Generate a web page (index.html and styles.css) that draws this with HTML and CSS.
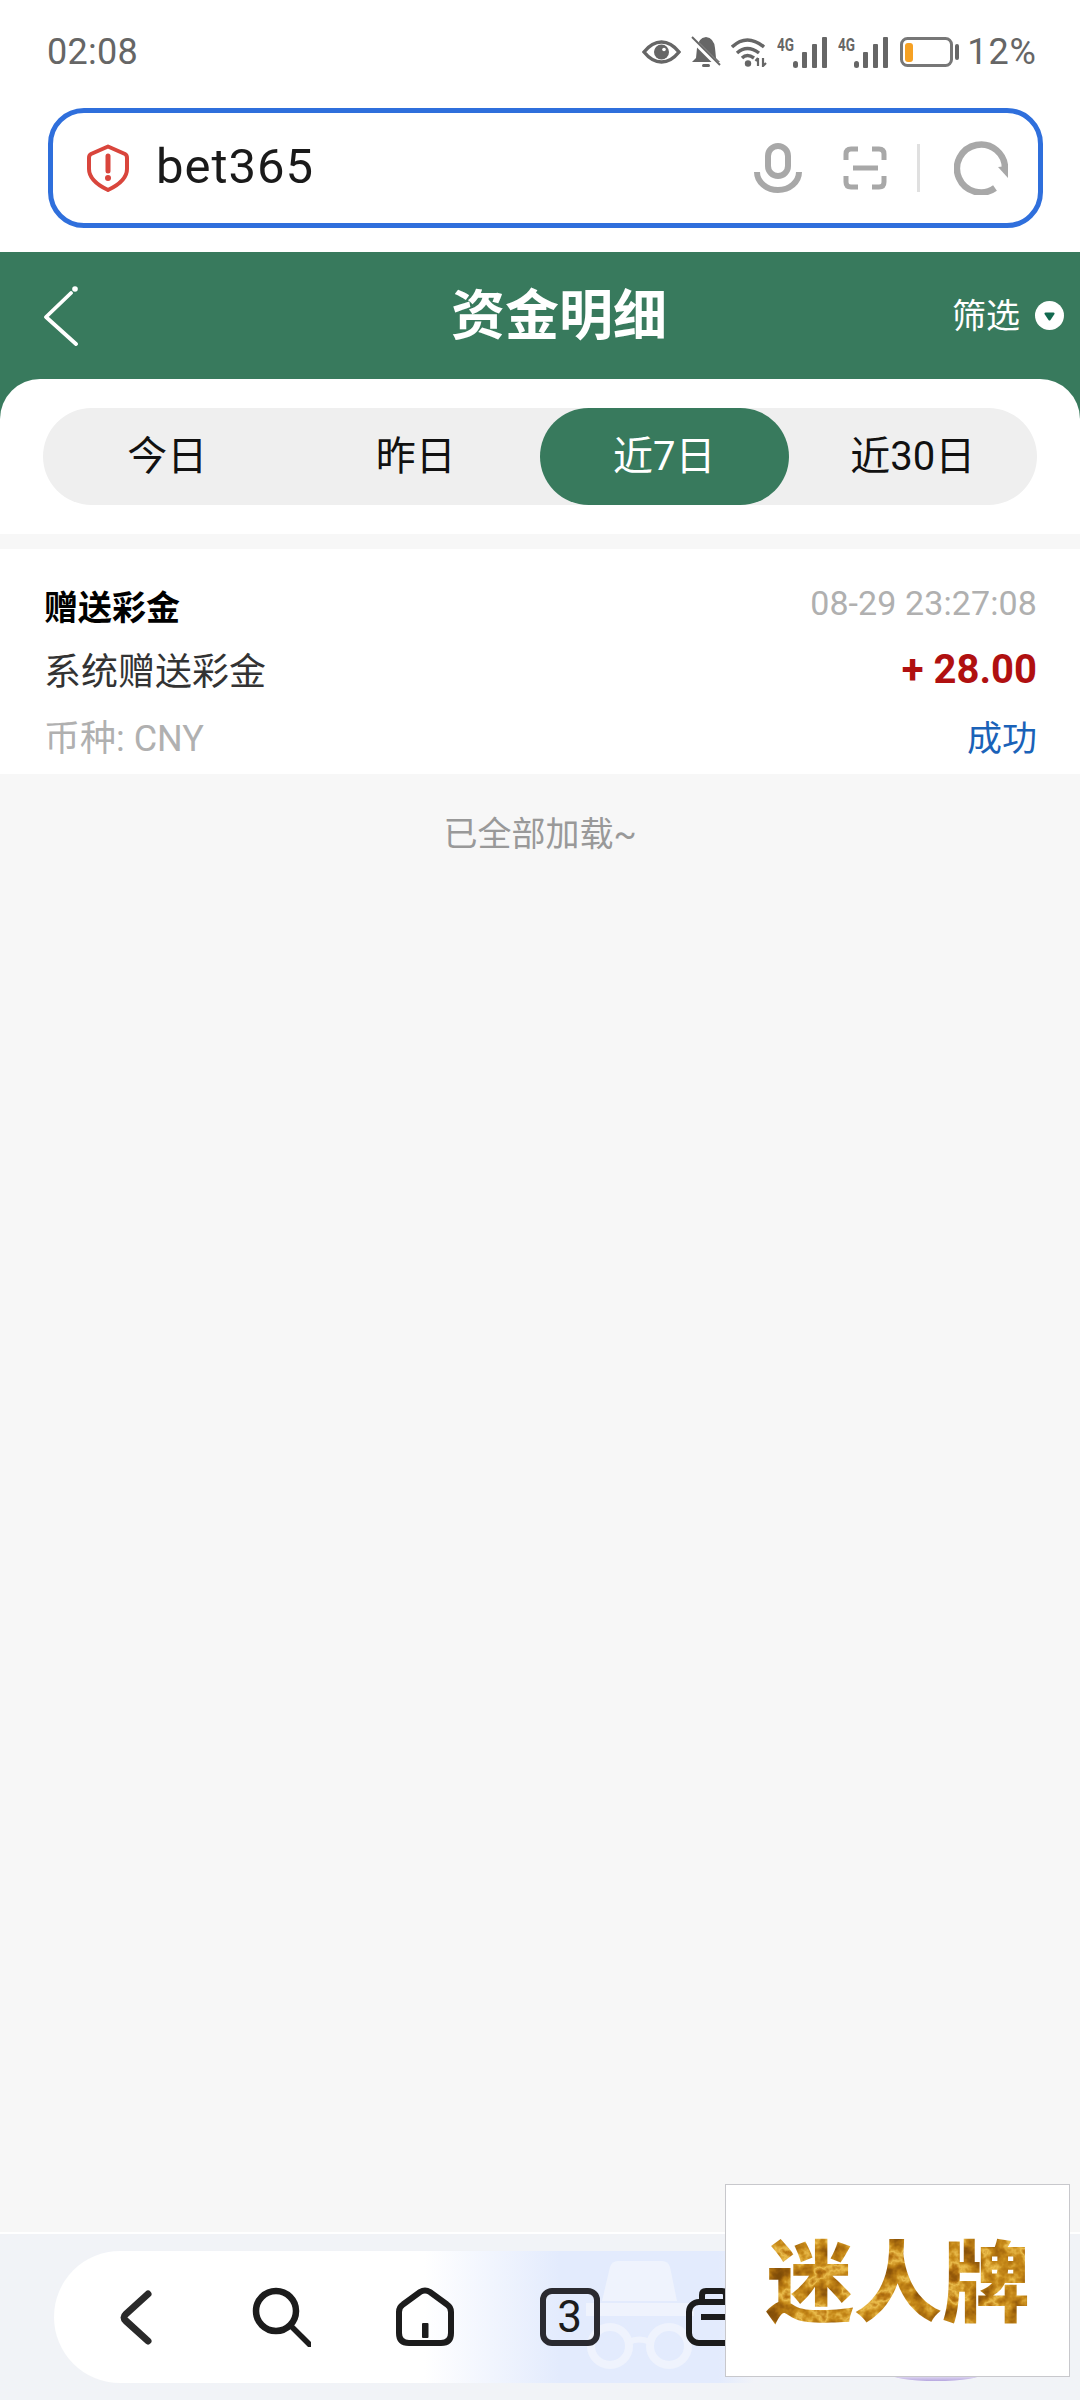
FILE: index.html
```html
<!DOCTYPE html>
<html lang="zh">
<head>
<meta charset="utf-8">
<title>资金明细</title>
<link rel="stylesheet" href="styles.css">
</head>
<body>
<div class="page">
  <div class="status">
    <span class="time">02:08</span>
    <div class="status-icons">
      <svg class="st-eye" viewBox="0 0 39 24"><path d="M2 12 Q10 2 19.500 2 Q29 2 37 12 Q29 22 19.500 22 Q10 22 2 12 Z" fill="none" stroke="#666" stroke-width="3.500"/><circle cx="19.500" cy="12" r="7.500" fill="#666"/><circle cx="22" cy="9.500" r="1.800" fill="#fff"/></svg>
      <svg class="st-bell" viewBox="0 0 30 32"><path d="M15 1 Q23 2 24 12 L25 22 L29 26 H1 L5 22 L6 12 Q7 2 15 1 Z" fill="#666"/><rect x="11" y="28" width="8" height="3" rx="1.500" fill="#666"/><path d="M1 3 L28 30" stroke="#fff" stroke-width="5"/><path d="M1 1 L29 29" stroke="#666" stroke-width="2"/></svg>
      <svg class="st-wifi" viewBox="0 0 36 30"><path d="M1 10 Q16 -4 33 10 M6 16 Q16 7 28 16 M11 21 Q16 16 23 21" fill="none" stroke="#666" stroke-width="3.400"/><circle cx="17" cy="26.500" r="3.200" fill="#666"/><path d="M27 29 V21 M24.500 24 L27 21 M32 21 V29 L35 26" fill="none" stroke="#666" stroke-width="2.200"/></svg>
      <svg class="st-sig" viewBox="0 -8 51 47"><text class="st-4g" x="0" y="14" textLength="17" lengthAdjust="spacingAndGlyphs">4G</text><rect x="16" y="24" width="5" height="7" rx="2.500" fill="#666"/><rect x="25" y="15" width="5" height="16" rx="1" fill="#666"/><rect x="35" y="7" width="5" height="24" rx="1" fill="#666"/><rect x="45" y="0" width="5" height="31" rx="1" fill="#666"/></svg>
      <svg class="st-sig" viewBox="0 -8 51 47"><text class="st-4g" x="0" y="14" textLength="17" lengthAdjust="spacingAndGlyphs">4G</text><rect x="16" y="24" width="5" height="7" rx="2.500" fill="#666"/><rect x="25" y="15" width="5" height="16" rx="1" fill="#666"/><rect x="35" y="7" width="5" height="24" rx="1" fill="#666"/><rect x="45" y="0" width="5" height="31" rx="1" fill="#666"/></svg>
      <svg class="st-bat" viewBox="0 0 60 30"><rect x="2.500" y="1.500" width="50" height="27" rx="6" fill="none" stroke="#777" stroke-width="3"/><rect x="6" y="6" width="8" height="19" rx="3" fill="#f6a123"/><rect x="56" y="7" width="4" height="16" rx="2" fill="#666"/></svg>
      <span class="pct">12%</span>
    </div>
  </div>

  <div class="addr-wrap">
    <div class="addr">
      <svg class="ic-shield" viewBox="0 0 42 48"><path d="M21 2.500 L38 10 Q40 11 40 14 V25 Q40 37 21 46 Q2 37 2 25 V14 Q2 11 4 10 Z" fill="none" stroke="#d9453c" stroke-width="4" stroke-linejoin="round"/><path d="M21 12 V27" stroke="#d9453c" stroke-width="5" stroke-linecap="round"/><circle cx="21" cy="34" r="3" fill="#d9453c"/></svg>
      <span class="addr-text">bet365</span>
      <div class="addr-tools">
        <svg class="ic-mic" viewBox="0 0 48 50"><rect x="14" y="3" width="20" height="30" rx="10" fill="none" stroke="#a8a8a8" stroke-width="6"/><path d="M3 29 A21 18 0 0 0 45 29" fill="none" stroke="#a8a8a8" stroke-width="6"/></svg>
        <svg class="ic-scan" viewBox="0 0 44 44"><path d="M3 14 V8 Q3 3 8 3 H15 M29 3 H36 Q41 3 41 8 V14 M41 30 V36 Q41 41 36 41 H29 M15 41 H8 Q3 41 3 36 V30 M10 22 H35" fill="none" stroke="#a8a8a8" stroke-width="5"/></svg>
        <span class="addr-div"></span>
        <svg class="ic-refresh" viewBox="0 0 54 54"><path d="M41 47 A24 24 0 1 1 51 28" fill="none" stroke="#a8a8a8" stroke-width="6.500"/><path d="M44 26 L54 25 L54 37 Z" fill="#a8a8a8"/></svg>
      </div>
    </div>
  </div>

  <header class="head">
    <svg class="ic-back" viewBox="0 0 36 60"><circle cx="32" cy="3" r="2.800" fill="#fff"/><path d="M28 7 L3 31 L33 58" fill="none" stroke="#fff" stroke-width="3.800" stroke-linecap="round" stroke-linejoin="round"/></svg>
    <h1 class="head-title">资金明细</h1>
    <div class="filter">
      <span>筛选</span>
      <svg class="ic-filter" viewBox="0 0 29 29"><circle cx="14.500" cy="14.500" r="14.500" fill="#fff"/><path d="M10.500 11.500 H18.500 Q20 11.500 19.500 13 L15.500 19 Q14.500 20 13.500 19 L9.500 13 Q9 11.500 10.500 11.500 Z" fill="#12694f"/></svg>
    </div>
  </header>

  <section class="panel">
    <div class="tabs">
      <div class="tab">今日</div>
      <div class="tab">昨日</div>
      <div class="tab tab-on">近7日</div>
      <div class="tab">近30日</div>
    </div>
  </section>

  <main class="list">
    <article class="card">
      <div class="row">
        <span class="c-title">赠送彩金</span>
        <span class="c-date">08-29 23:27:08</span>
      </div>
      <div class="row">
        <span class="c-desc">系统赠送彩金</span>
        <span class="c-amount">+ 28.00</span>
      </div>
      <div class="row row-foot">
        <span class="c-cur">币种: CNY</span>
        <span class="c-state">成功</span>
      </div>
    </article>
    <p class="end">已全部加载~</p>
  </main>

  <nav class="nav">
    <div class="pill">
      <svg class="ghost" viewBox="0 0 110 112"><path d="M16 42 L24 8 Q26 2 32 2 H76 Q82 2 84 8 L91 42 Z" fill="#eff3fd"/><rect x="0" y="44" width="108" height="13" fill="#eff3fd"/><circle cx="24" cy="87" r="19" fill="none" stroke="#eff3fd" stroke-width="8"/><circle cx="83" cy="87" r="19" fill="none" stroke="#eff3fd" stroke-width="8"/><path d="M43 83 Q53 78 64 83" fill="none" stroke="#eff3fd" stroke-width="6"/></svg>
      <svg class="nav-ic" viewBox="0 0 60 60"><path d="M42 7 L20 27 Q16 30.500 20 34 L42 54" fill="none" stroke="#2a2a2a" stroke-width="7" stroke-linecap="round"/></svg>
      <svg class="nav-ic" viewBox="0 0 60 60"><circle cx="25" cy="24" r="20" fill="none" stroke="#1c1c1c" stroke-width="6.500"/><path d="M40 39 L59 58" stroke="#1c1c1c" stroke-width="5.500" stroke-linecap="round"/></svg>
      <svg class="nav-ic" viewBox="0 0 60 60"><path d="M4 25 Q4 20 8 17.500 L25 5 Q30 2 35 5 L52 17.500 Q56 20 56 25 V46 Q56 56 46 56 H14 Q4 56 4 46 Z" fill="none" stroke="#1c1c1c" stroke-width="6"/><rect x="27" y="36" width="6.500" height="15" rx="1" fill="#1c1c1c"/></svg>
      <div class="tabs-count">3</div>
      <svg class="nav-ic" viewBox="0 0 60 60"><rect x="5" y="15" width="50" height="41" rx="10" fill="none" stroke="#1c1c1c" stroke-width="6"/><path d="M18 14 V8 Q18 4 22 4 H38 Q42 4 42 8 V14 M17 30 H43" fill="none" stroke="#1c1c1c" stroke-width="6"/></svg>
      <span class="orb"></span>
    </div>
  </nav>

  <aside class="stamp">
    <svg class="stamp-art" viewBox="0 0 345 193">
      <filter id="gold" x="0" y="0" width="100%" height="100%" color-interpolation-filters="sRGB">
        <feTurbulence type="fractalNoise" baseFrequency="0.05" numOctaves="4" seed="11"/>
        <feColorMatrix values="1 0 0 0 0  1 0 0 0 0  1 0 0 0 0  0 0 0 0 1"/>
        <feComponentTransfer>
          <feFuncR type="table" tableValues="0.5 0.5 0.56 0.68 0.78 0.92 0.74 0.6 0.52"/>
          <feFuncG type="table" tableValues="0.3 0.3 0.34 0.44 0.54 0.74 0.48 0.36 0.3"/>
          <feFuncB type="table" tableValues="0.03 0.03 0.04 0.06 0.1 0.3 0.08 0.04 0.03"/>
        </feComponentTransfer>
        <feComposite in2="SourceAlpha" operator="in"/>
      </filter>
      <text class="stamp-text" x="173" y="130" text-anchor="middle" filter="url(#gold)">迷人牌</text>
    </svg>
  </aside>
</div>
</body>
</html>
```

FILE: styles.css
```css
* { box-sizing: border-box; }
html, body { margin: 0; padding: 0; }
body {
  width: 1080px;
  height: 2400px;
  overflow: hidden;
  background: #fff;
  font-family: Roboto, "Noto Sans CJK SC", sans-serif;
}
.page {
  position: relative;
  width: 1080px;
  height: 2400px;
  display: flex;
  flex-direction: column;
}

/* status bar */
.status {
  height: 108px;
  padding: 0 43px 4px 47px;
  display: flex;
  align-items: center;
  justify-content: space-between;
  color: #666;
  flex: none;
}
.time { font-size: 36px; letter-spacing: 0.300px; }
.status-icons { display: flex; align-items: center; gap: 10px; }
.st-eye { width: 39px; height: 24px; }
.st-bell { width: 30px; height: 32px; }
.st-wifi { width: 36px; height: 30px; }
.st-sig { width: 51px; height: 47px; }
.st-bat { width: 60px; height: 30px; }
.st-4g { font: 700 18px "Roboto", sans-serif; fill: #666; }
.pct { font-size: 36px; letter-spacing: 1px; margin-left: -2px; line-height: 1; }

/* address bar */
.addr-wrap { flex: none; padding: 0 37px 24px 48px; }
.addr {
  height: 120px;
  border: 5px solid #2f6fdc;
  border-radius: 36px;
  padding: 0 30px 0 34px;
  display: flex;
  align-items: center;
}
.ic-shield { width: 42px; height: 48px; flex: none; }
.addr-text {
  margin-left: 27px;
  padding-bottom: 3px;
  font-size: 49px;
  letter-spacing: 1px;
  color: #1a1a1a;
  font-weight: 400;
}
.addr-tools { margin-left: auto; display: flex; align-items: center; }
.ic-mic { width: 48px; height: 50px; }
.ic-scan { width: 44px; height: 44px; margin-left: 41px; }
.addr-div { width: 3px; height: 48px; background: #e0e0e0; margin: 0 34px 0 30px; }
.ic-refresh { width: 54px; height: 54px; }

/* green header */
.head {
  flex: none;
  height: 167px;
  padding: 0 16px 40px 43px;
  background: #387a5d;
  color: #fff;
  display: flex;
  align-items: center;
}
.ic-back { width: 36px; height: 60px; flex: none; }
.head-title {
  margin: 2px 0 0 372px;
  font-size: 54px;
  font-weight: 700;
  line-height: 1;
}
.filter {
  margin-left: auto;
  display: flex;
  align-items: center;
  gap: 15px;
  font-size: 34px;
}
.filter span { padding-bottom: 5px; }
.ic-filter { width: 29px; height: 29px; }

/* period tabs */
.panel {
  flex: none;
  position: relative;
  margin-top: -40px;
  height: 155px;
  padding: 29px 43px 0;
  background: #fff;
  border-radius: 40px 40px 0 0;
}
.tabs {
  height: 97px;
  display: grid;
  grid-template-columns: repeat(4, 1fr);
  background: #efefef;
  border-radius: 49px;
}
.tab {
  display: flex;
  align-items: center;
  justify-content: center;
  padding-bottom: 8px;
  border-radius: 49px;
  font-size: 40px;
  color: #111;
}
.tab-on { background: #387a5d; color: #fff; }

/* list */
.list {
  flex: 1;
  background: #f7f7f7;
  padding-top: 15px;
}
.card {
  height: 225px;
  padding: 33px 43px 0 44px;
  background: #fff;
  display: flex;
  flex-direction: column;
  gap: 18px;
}
.row {
  height: 46px;
  display: flex;
  align-items: center;
  justify-content: space-between;
}
.row-foot { margin-top: 2px; }
.c-title { font-size: 34px; font-weight: 700; color: #000; }
.c-date { font-size: 34px; letter-spacing: 0.100px; color: #b0b0b0; padding-bottom: 4px; }
.c-desc { font-size: 37px; color: #333; }
.c-amount { font-size: 40px; font-weight: 700; color: #b01010; }
.c-cur { font-size: 36px; color: #b0b0b0; }
.c-state { font-size: 35px; color: #1a62b8; }
.end {
  margin: 37px 0 0;
  text-align: center;
  font-size: 34px;
  line-height: 46px;
  color: #999;
}

/* bottom nav */
.nav {
  flex: none;
  height: 168px;
  border-top: 2px solid #fff;
  background: #f1f3f7;
  padding: 17px 54px 0;
}
.pill {
  position: relative;
  height: 132px;
  border-radius: 66px;
  padding-left: 52px;
  display: flex;
  align-items: center;
  gap: 84.500px;
  overflow: hidden;
  background: linear-gradient(90deg, #fff 0, #fff 370px, #e3ebfd 505px, #e3ebfd 665px, #f1f3f8 700px);
}
.nav-ic { width: 60px; height: 60px; flex: none; position: relative; }
.tabs-count {
  position: relative;
  flex: none;
  width: 60px;
  height: 58px;
  border: 6px solid #2a2a30;
  border-radius: 12px;
  display: flex;
  align-items: center;
  justify-content: center;
  font-size: 44px;
  line-height: 1;
  color: #1c1c1c;
}
.ghost {
  position: absolute;
  left: 532px;
  top: 8px;
  width: 110px;
  height: 112px;
}
.orb {
  position: absolute;
  left: 834px;
  bottom: 2px;
  width: 96px;
  height: 20px;
  border-radius: 0 0 48px 48px / 0 0 8px 8px;
  background: linear-gradient(180deg, #fff 60%, #b6a6df 100%);
}

/* watermark stamp */
.stamp {
  position: absolute;
  left: 725px;
  top: 2184px;
  width: 345px;
  height: 193px;
  background: #fff;
  border: 1.500px solid #c8c8cc;
}
.stamp-art { display: block; width: 100%; height: 100%; }
.stamp-text {
  font-family: "Noto Sans CJK SC", sans-serif;
  font-size: 89px;
  font-weight: 900;
  fill: #000;
}
```
